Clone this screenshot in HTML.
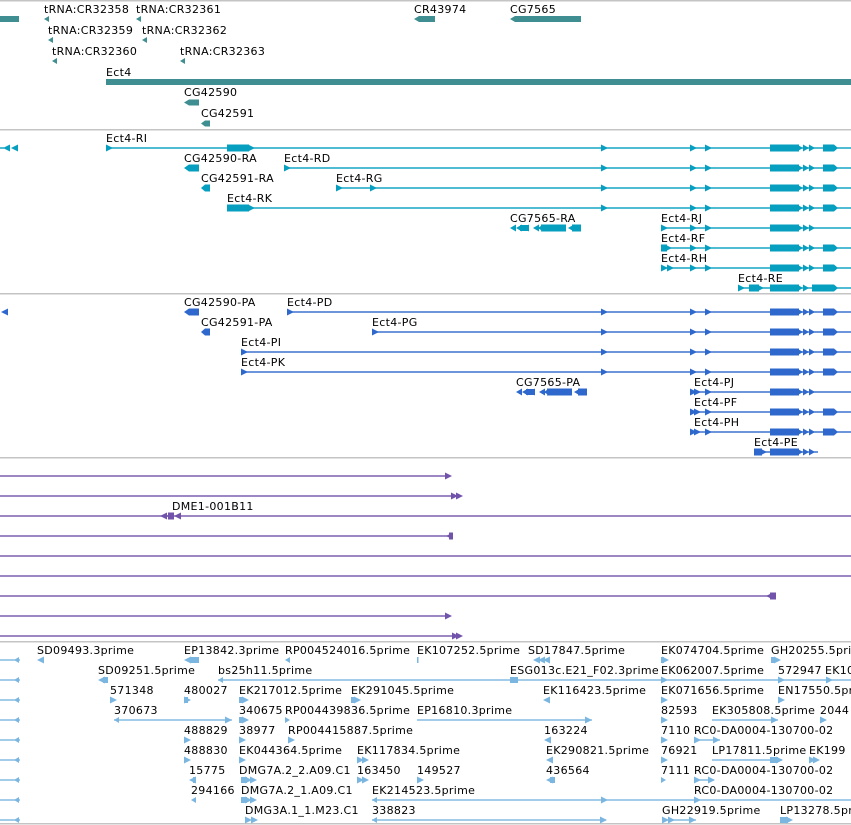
<!DOCTYPE html>
<html><head><meta charset="utf-8"><style>
html,body{margin:0;padding:0;background:#fff;width:851px;height:825px;overflow:hidden}
svg{display:block}
text{font-family:"DejaVu Sans","Liberation Sans",sans-serif;font-size:11px;fill:#000;letter-spacing:0.3px}
</style></head><body>
<svg width="851" height="825" xmlns="http://www.w3.org/2000/svg">
<defs>
<path id="ar" d="M0,-3.5L7,0L0,3.5Z"/>
<path id="al" d="M7,-3.5L0,0L7,3.5Z"/>
<path id="als" d="M5,-3L0,0L5,3Z"/>
<g id="tail2"><use href="#ar" x="690"/><use href="#ar" x="705"/><rect x="770" y="-3.5" width="29" height="7"/><path d="M797,-3.5L803,0L797,3.5Z M803,-3.5L809,0L803,3.5Z M809,-3.5L815,0L809,3.5Z"/></g>
<g id="tail"><use href="#ar" x="601"/><use href="#tail2"/></g>
<g id="tailE"><use href="#tail"/><path d="M823,-3.5L834,-3.5L838,0L834,3.5L823,3.5Z"/></g>
<g id="tail2E"><use href="#tail2"/><path d="M823,-3.5L834,-3.5L838,0L834,3.5L823,3.5Z"/></g>
<g id="cg75"><path d="M510,0L516,-3.5L516,3.5Z M516,0L522,-3.5L522,3.5Z M520,-3L528,-3L528,3L520,3Z M523,0L529,-3.5L529,3.5Z M533,0L539,-3.5L539,3.5Z M538,0L543,-3.5L543,3.5Z M541,-3.5L566,-3.5L566,3.5L541,3.5Z M568,0L574,-3.5L574,3.5Z M572,-3.5L581,-3.5L581,3.5L572,3.5Z"/></g>
</defs>

<g fill="#c4c4c4">
<rect x="0" y="0" width="851" height="1.5"/>
<rect x="0" y="129" width="851" height="1.5"/>
<rect x="0" y="293" width="851" height="1.5"/>
<rect x="0" y="457" width="851" height="1.5"/>
<rect x="0" y="641" width="851" height="1.5"/>
<rect x="0" y="823" width="851" height="1.5"/>
</g>

<g fill="#3f8f92">
<rect x="0" y="16" width="19" height="6"/>
<use href="#als" x="44" y="19"/><use href="#als" x="136" y="19"/>
<use href="#als" x="48" y="40"/><use href="#als" x="142" y="40"/>
<use href="#als" x="52" y="61"/><use href="#als" x="180" y="61"/>
<path d="M414,19L419,16L435,16L435,22L419,22Z"/>
<path d="M510,19L515,16L581,16L581,22L515,22Z"/>
<rect x="106" y="79" width="745" height="6"/>
<path d="M184,102.5L189,99.5L199,99.5L199,105.5L189,105.5Z"/>
<path d="M201,123.5L205,120.5L210,120.5L210,126.5L205,126.5Z"/>
</g>
<text x="44" y="13">tRNA:CR32358</text><text x="136" y="13">tRNA:CR32361</text>
<text x="48" y="34">tRNA:CR32359</text><text x="142" y="34">tRNA:CR32362</text>
<text x="52" y="55">tRNA:CR32360</text><text x="180" y="55">tRNA:CR32363</text>
<text x="414" y="13">CR43974</text><text x="510" y="13">CG7565</text>
<text x="106" y="76">Ect4</text>
<text x="184" y="96">CG42590</text>
<text x="201" y="117">CG42591</text>

<g fill="#069fc0">
<g transform="translate(0,148)"><rect x="0" y="-0.7" width="4" height="1.4"/><use href="#al" x="3"/><use href="#al" x="11"/><rect x="106" y="-0.7" width="745" height="1.4"/><use href="#ar" x="106"/><rect x="227" y="-3.5" width="22" height="7"/><use href="#ar" x="248"/><use href="#tailE"/></g>
<g transform="translate(0,168)"><path d="M184,0L189,-3.5L199,-3.5L199,3.5L189,3.5Z"/><rect x="284" y="-0.7" width="567" height="1.4"/><use href="#ar" x="284"/><use href="#tailE"/></g>
<g transform="translate(0,188)"><path d="M201,0L205,-3.5L210,-3.5L210,3.5L205,3.5Z"/><rect x="336" y="-0.7" width="515" height="1.4"/><use href="#ar" x="336"/><use href="#ar" x="370"/><use href="#tailE"/></g>
<g transform="translate(0,208)"><rect x="227" y="-0.7" width="624" height="1.4"/><rect x="227" y="-3.5" width="22" height="7"/><use href="#ar" x="248"/><use href="#tailE"/></g>
<g transform="translate(0,228)"><use href="#cg75"/><rect x="661" y="-0.7" width="190" height="1.4"/><use href="#ar" x="661"/><use href="#tail2"/></g>
<g transform="translate(0,248)"><rect x="661" y="-0.7" width="190" height="1.4"/><rect x="661" y="-3.5" width="6" height="7"/><use href="#ar" x="665"/><use href="#tail2E"/></g>
<g transform="translate(0,268)"><rect x="661" y="-0.7" width="190" height="1.4"/><use href="#ar" x="661"/><use href="#ar" x="667"/><use href="#tail2E"/></g>
<g transform="translate(0,288)"><rect x="738" y="-0.7" width="113" height="1.4"/><use href="#ar" x="738"/><rect x="749" y="-3.5" width="10" height="7"/><use href="#ar" x="757"/><rect x="770" y="-3.5" width="29" height="7"/><path d="M797,-3.5L803,0L797,3.5Z M803,-3.5L809,0L803,3.5Z"/><path d="M812,-3.5L834,-3.5L838,0L834,3.5L812,3.5Z"/></g>
</g>
<text x="106" y="142">Ect4-RI</text>
<text x="184" y="162">CG42590-RA</text><text x="284" y="162">Ect4-RD</text>
<text x="201" y="182">CG42591-RA</text><text x="336" y="182">Ect4-RG</text>
<text x="227" y="202">Ect4-RK</text>
<text x="510" y="222">CG7565-RA</text><text x="661" y="222">Ect4-RJ</text>
<text x="661" y="242">Ect4-RF</text>
<text x="661" y="262">Ect4-RH</text>
<text x="738" y="282">Ect4-RE</text>

<g fill="#2f68cc">
<g transform="translate(0,312)"><use href="#al" x="1"/><path d="M184,0L189,-3.5L199,-3.5L199,3.5L189,3.5Z"/><rect x="287" y="-0.7" width="564" height="1.4"/><use href="#ar" x="287"/><use href="#tailE"/></g>
<g transform="translate(0,332)"><path d="M201,0L205,-3.5L210,-3.5L210,3.5L205,3.5Z"/><rect x="372" y="-0.7" width="479" height="1.4"/><use href="#ar" x="372"/><use href="#tailE"/></g>
<g transform="translate(0,352)"><rect x="241" y="-0.7" width="610" height="1.4"/><use href="#ar" x="241"/><use href="#tailE"/></g>
<g transform="translate(0,372)"><rect x="241" y="-0.7" width="610" height="1.4"/><use href="#ar" x="241"/><use href="#tailE"/></g>
<g transform="translate(6,392)"><use href="#cg75"/></g>
<g transform="translate(0,392)"><rect x="694" y="-0.7" width="157" height="1.4"/><use href="#ar" x="694"/><use href="#tail2"/></g>
<g transform="translate(0,412)"><rect x="694" y="-0.7" width="157" height="1.4"/><use href="#ar" x="694"/><use href="#tail2E"/></g>
<g transform="translate(0,432)"><rect x="694" y="-0.7" width="157" height="1.4"/><use href="#ar" x="694"/><use href="#tail2E"/></g>
<g transform="translate(0,452)"><rect x="754" y="-0.7" width="64" height="1.4"/><rect x="754" y="-3.5" width="8" height="7"/><use href="#ar" x="760"/><rect x="770" y="-3.5" width="29" height="7"/><path d="M797,-3.5L803,0L797,3.5Z M803,-3.5L809,0L803,3.5Z M809,-3.5L815,0L809,3.5Z"/></g>
</g>
<text x="184" y="306">CG42590-PA</text><text x="287" y="306">Ect4-PD</text>
<text x="201" y="326">CG42591-PA</text><text x="372" y="326">Ect4-PG</text>
<text x="241" y="346">Ect4-PI</text>
<text x="241" y="366">Ect4-PK</text>
<text x="516" y="386">CG7565-PA</text><text x="694" y="386">Ect4-PJ</text>
<text x="694" y="406">Ect4-PF</text>
<text x="694" y="426">Ect4-PH</text>
<text x="754" y="446">Ect4-PE</text>

<g fill="#7253ab">
<rect x="0" y="475.3" width="448" height="1.4"/><use href="#ar" x="445" y="476"/>
<rect x="0" y="495.3" width="455" height="1.4"/><use href="#ar" x="451" y="496"/><use href="#ar" x="456" y="496"/>
<rect x="0" y="515.3" width="851" height="1.4"/><use href="#al" x="160" y="516"/><use href="#al" x="166" y="516"/><rect x="168" y="512.5" width="6" height="7"/><use href="#al" x="174" y="516"/>
<rect x="0" y="535.3" width="450" height="1.4"/><use href="#al" x="446" y="536"/><rect x="449" y="532.5" width="4" height="7"/>
<rect x="0" y="555.3" width="851" height="1.4"/>
<rect x="0" y="575.3" width="851" height="1.4"/>
<rect x="0" y="595.3" width="770" height="1.4"/><use href="#al" x="766" y="596"/><rect x="770" y="592.5" width="6" height="7"/>
<rect x="0" y="615.3" width="448" height="1.4"/><use href="#ar" x="445" y="616"/>
<rect x="0" y="635.3" width="455" height="1.4"/><use href="#ar" x="452" y="636"/><use href="#ar" x="456" y="636"/>
</g>
<text x="172" y="510">DME1-001B11</text>

<g fill="#7ab6e0">
<g id="lc"><rect x="0" y="659.3" width="20" height="1.4"/><use href="#als" x="14" y="660"/></g>
<use href="#lc" y="20"/><use href="#lc" y="40"/><use href="#lc" y="60"/><use href="#lc" y="80"/><use href="#lc" y="100"/><use href="#lc" y="120"/><use href="#lc" y="140"/><use href="#lc" y="160"/>
<use href="#al" x="37" y="660"/><rect x="190" y="657" width="9" height="6"/><use href="#al" x="184" y="660"/><use href="#als" x="285" y="660"/><rect x="417" y="657" width="1.5" height="6"/><use href="#al" x="533" y="660"/><use href="#al" x="538" y="660"/><use href="#al" x="543" y="660"/><rect x="661" y="657" width="3" height="6"/><use href="#ar" x="662" y="660"/><rect x="771" y="657" width="4" height="6"/><use href="#ar" x="774" y="660"/>
<use href="#al" x="98" y="680"/><rect x="103" y="677" width="5" height="6"/><rect x="218" y="679.3" width="633" height="1.4"/><use href="#als" x="218" y="680"/><rect x="510" y="677" width="8" height="6"/><use href="#ar" x="661" y="680"/><use href="#ar" x="778" y="680"/><use href="#ar" x="826" y="680"/>
<use href="#ar" x="110" y="700"/><use href="#ar" x="184" y="700"/><rect x="184" y="697" width="4" height="6"/><rect x="239" y="697" width="4" height="6"/><use href="#ar" x="242" y="700"/><rect x="351" y="697" width="4" height="6"/><use href="#ar" x="354" y="700"/><use href="#al" x="543" y="700"/><use href="#ar" x="661" y="700"/><use href="#ar" x="778" y="700"/>
<rect x="114" y="719.3" width="118" height="1.4"/><use href="#als" x="114" y="720"/><use href="#ar" x="225" y="720"/><rect x="239" y="717" width="4" height="6"/><use href="#ar" x="242" y="720"/><use href="#als" x="288" y="720" transform="translate(578,1440) scale(-1,-1)"/><rect x="417" y="719.3" width="175" height="1.4"/><use href="#ar" x="585" y="720"/><use href="#ar" x="661" y="720"/><rect x="712" y="719.3" width="66" height="1.4"/><use href="#ar" x="771" y="720"/><use href="#ar" x="820" y="720"/>
<use href="#ar" x="184" y="740"/><use href="#ar" x="239" y="740"/><use href="#ar" x="288" y="740"/><use href="#al" x="544" y="740"/><use href="#ar" x="661" y="740"/><rect x="694" y="739.3" width="26" height="1.4"/><use href="#ar" x="694" y="740"/><use href="#ar" x="713" y="740"/>
<use href="#ar" x="184" y="760"/><use href="#ar" x="239" y="760"/><use href="#ar" x="357" y="760"/><use href="#ar" x="362" y="760"/><use href="#al" x="546" y="760"/><use href="#ar" x="661" y="760"/><rect x="712" y="759.3" width="70" height="1.4"/><rect x="770" y="757" width="8" height="6"/><use href="#ar" x="776" y="760"/><use href="#ar" x="809" y="760"/><use href="#ar" x="813" y="760"/>
<use href="#al" x="189" y="780"/><rect x="193" y="777" width="3" height="6"/><rect x="241" y="777" width="6" height="6"/><use href="#ar" x="245" y="780"/><use href="#ar" x="250" y="780"/><use href="#ar" x="357" y="780"/><use href="#ar" x="362" y="780"/><use href="#ar" x="417" y="780"/><use href="#al" x="546" y="780"/><rect x="550" y="777" width="5" height="6"/><use href="#als" x="661" y="780" transform="translate(1327,1560) scale(-1,-1)"/><rect x="694" y="779.3" width="20" height="1.4"/><use href="#ar" x="694" y="780"/><use href="#ar" x="708" y="780"/>
<use href="#als" x="191" y="800"/><rect x="241" y="797" width="6" height="6"/><use href="#ar" x="245" y="800"/><use href="#ar" x="250" y="800"/><rect x="372" y="799.3" width="479" height="1.4"/><use href="#als" x="372" y="800"/><use href="#ar" x="601" y="800"/><use href="#ar" x="694" y="800"/>
<use href="#ar" x="245" y="820"/><use href="#ar" x="251" y="820"/><rect x="372" y="819.3" width="234" height="1.4"/><use href="#als" x="372" y="820"/><use href="#ar" x="600" y="820"/><rect x="662" y="819.3" width="34" height="1.4"/><use href="#ar" x="662" y="820"/><use href="#ar" x="668" y="820"/><use href="#ar" x="689" y="820"/><rect x="780" y="817" width="8" height="6"/><use href="#ar" x="786" y="820"/>
</g>
<g>
<text x="37" y="654">SD09493.3prime</text><text x="184" y="654">EP13842.3prime</text><text x="285" y="654">RP004524016.5prime</text><text x="417" y="654">EK107252.5prime</text><text x="528" y="654">SD17847.5prime</text><text x="661" y="654">EK074704.5prime</text><text x="771" y="654">GH20255.5prime</text>
<text x="98" y="674">SD09251.5prime</text><text x="218" y="674">bs25h11.5prime</text><text x="510" y="674">ESG013c.E21_F02.3prime</text><text x="661" y="674">EK062007.5prime</text><text x="778" y="674">572947</text><text x="825" y="674">EK10</text>
<text x="110" y="694">571348</text><text x="184" y="694">480027</text><text x="239" y="694">EK217012.5prime</text><text x="351" y="694">EK291045.5prime</text><text x="543" y="694">EK116423.5prime</text><text x="661" y="694">EK071656.5prime</text><text x="778" y="694">EN17550.5prime</text>
<text x="114" y="714">370673</text><text x="239" y="714">340675</text><text x="285" y="714">RP004439836.5prime</text><text x="417" y="714">EP16810.3prime</text><text x="661" y="714">82593</text><text x="712" y="714">EK305808.5prime</text><text x="820" y="714">2044</text>
<text x="184" y="734">488829</text><text x="239" y="734">38977</text><text x="288" y="734">RP004415887.5prime</text><text x="544" y="734">163224</text><text x="661" y="734">7110</text><text x="694" y="734">RC0-DA0004-130700-02</text>
<text x="184" y="754">488830</text><text x="239" y="754">EK044364.5prime</text><text x="357" y="754">EK117834.5prime</text><text x="546" y="754">EK290821.5prime</text><text x="661" y="754">76921</text><text x="712" y="754">LP17811.5prime</text><text x="809" y="754">EK199</text>
<text x="189" y="774">15775</text><text x="239" y="774">DMG7A.2_2.A09.C1</text><text x="357" y="774">163450</text><text x="417" y="774">149527</text><text x="546" y="774">436564</text><text x="661" y="774">7111</text><text x="694" y="774">RC0-DA0004-130700-02</text>
<text x="191" y="794">294166</text><text x="241" y="794">DMG7A.2_1.A09.C1</text><text x="372" y="794">EK214523.5prime</text><text x="694" y="794">RC0-DA0004-130700-02</text>
<text x="245" y="814">DMG3A.1_1.M23.C1</text><text x="372" y="814">338823</text><text x="662" y="814">GH22919.5prime</text><text x="780" y="814">LP13278.5prime</text>
</g>
</svg>
</body></html>
